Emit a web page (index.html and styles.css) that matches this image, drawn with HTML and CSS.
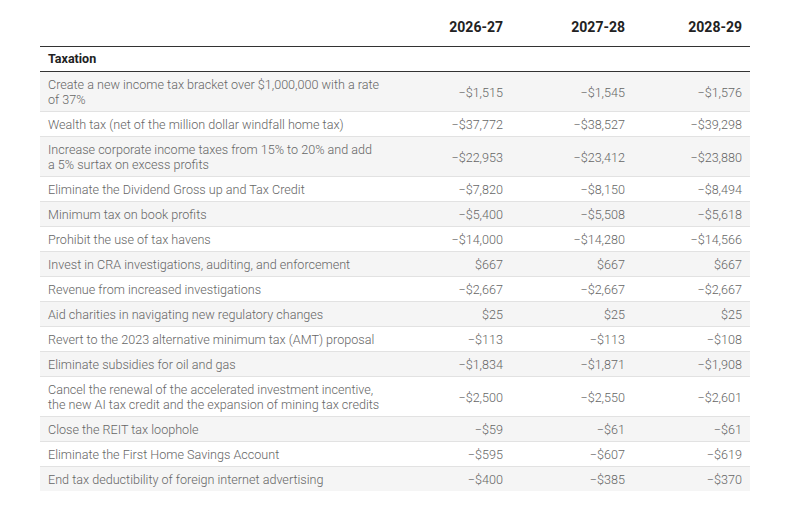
FILE: index.html
```html
<!DOCTYPE html>
<html lang="en">
<head>
<meta charset="utf-8">
<title>Taxation</title>
<link rel="stylesheet" href="styles.css">
</head>
<body>
<div class="wrap">
<table class="fin">
  <colgroup>
    <col class="c-label"><col class="c-num"><col class="c-num"><col class="c-last">
  </colgroup>
  <thead>
    <tr class="years"><th></th><th>2026-27</th><th>2027-28</th><th>2028-29</th></tr>
  </thead>
  <tbody>
    <tr class="section"><th colspan="4">Taxation</th></tr>
    <tr><td>Create a new income tax bracket over $1,000,000 with a rate of 37%</td><td>−$1,515</td><td>−$1,545</td><td>−$1,576</td></tr>
    <tr><td>Wealth tax (net of the million dollar windfall home tax)</td><td>−$37,772</td><td>−$38,527</td><td>−$39,298</td></tr>
    <tr><td>Increase corporate income taxes from 15% to 20% and add a 5% surtax on excess profits</td><td>−$22,953</td><td>−$23,412</td><td>−$23,880</td></tr>
    <tr><td>Eliminate the Dividend Gross up and Tax Credit</td><td>−$7,820</td><td>−$8,150</td><td>−$8,494</td></tr>
    <tr><td>Minimum tax on book profits</td><td>−$5,400</td><td>−$5,508</td><td>−$5,618</td></tr>
    <tr><td>Prohibit the use of tax havens</td><td>−$14,000</td><td>−$14,280</td><td>−$14,566</td></tr>
    <tr><td>Invest in CRA investigations, auditing, and enforcement</td><td>$667</td><td>$667</td><td>$667</td></tr>
    <tr><td>Revenue from increased investigations</td><td>−$2,667</td><td>−$2,667</td><td>−$2,667</td></tr>
    <tr><td>Aid charities in navigating new regulatory changes</td><td>$25</td><td>$25</td><td>$25</td></tr>
    <tr><td>Revert to the 2023 alternative minimum tax (AMT) proposal</td><td>−$113</td><td>−$113</td><td>−$108</td></tr>
    <tr><td>Eliminate subsidies for oil and gas</td><td>−$1,834</td><td>−$1,871</td><td>−$1,908</td></tr>
    <tr><td>Cancel the renewal of the accelerated investment incentive, the new AI tax credit and the expansion of mining tax credits</td><td>−$2,500</td><td>−$2,550</td><td>−$2,601</td></tr>
    <tr><td>Close the REIT tax loophole</td><td>−$59</td><td>−$61</td><td>−$61</td></tr>
    <tr><td>Eliminate the First Home Savings Account</td><td>−$595</td><td>−$607</td><td>−$619</td></tr>
    <tr><td>End tax deductibility of foreign internet advertising</td><td>−$400</td><td>−$385</td><td>−$370</td></tr>
  </tbody>
</table>
</div>
</body>
</html>
```

FILE: styles.css
```css
html, body {
  margin: 0;
  padding: 0;
  background: #ffffff;
}
.wrap {
  padding: 17px 0 0 40px;
}
.fin {
  width: 710px;
  border-collapse: collapse;
  table-layout: fixed;
  font-family: Roboto, "Liberation Sans", sans-serif;
  font-size: 12.6px;
  color: #666666;
}
.c-label { width: 349px; }
.c-num { width: 122px; }
.c-last { width: 117px; }

.years th {
  font-weight: 700;
  font-size: 14px;
  color: #222222;
  text-align: right;
  padding: 0 8px 8px 8px;
  height: 21px;
  border-bottom: 1px solid #333333;
  line-height: 21px;
}
.section th {
  text-align: left;
  font-weight: 700;
  font-size: 12.5px;
  color: #222222;
  padding: 0 8px;
  height: 24px;
  line-height: 16px;
  border-bottom: 1px solid #333333;
}
tbody td {
  font-weight: 300;
  line-height: 15px;
  padding: 5px 8px 4px 8px;
  border-bottom: 1px solid #e2e2e2;
  text-align: right;
  vertical-align: middle;
}
tbody td:first-child {
  text-align: left;
  padding-right: 8px;
}
tbody tr:nth-child(even) td {
  background: #f5f5f5;
}
tbody tr:last-child td {
  border-bottom: 0;
}
```
